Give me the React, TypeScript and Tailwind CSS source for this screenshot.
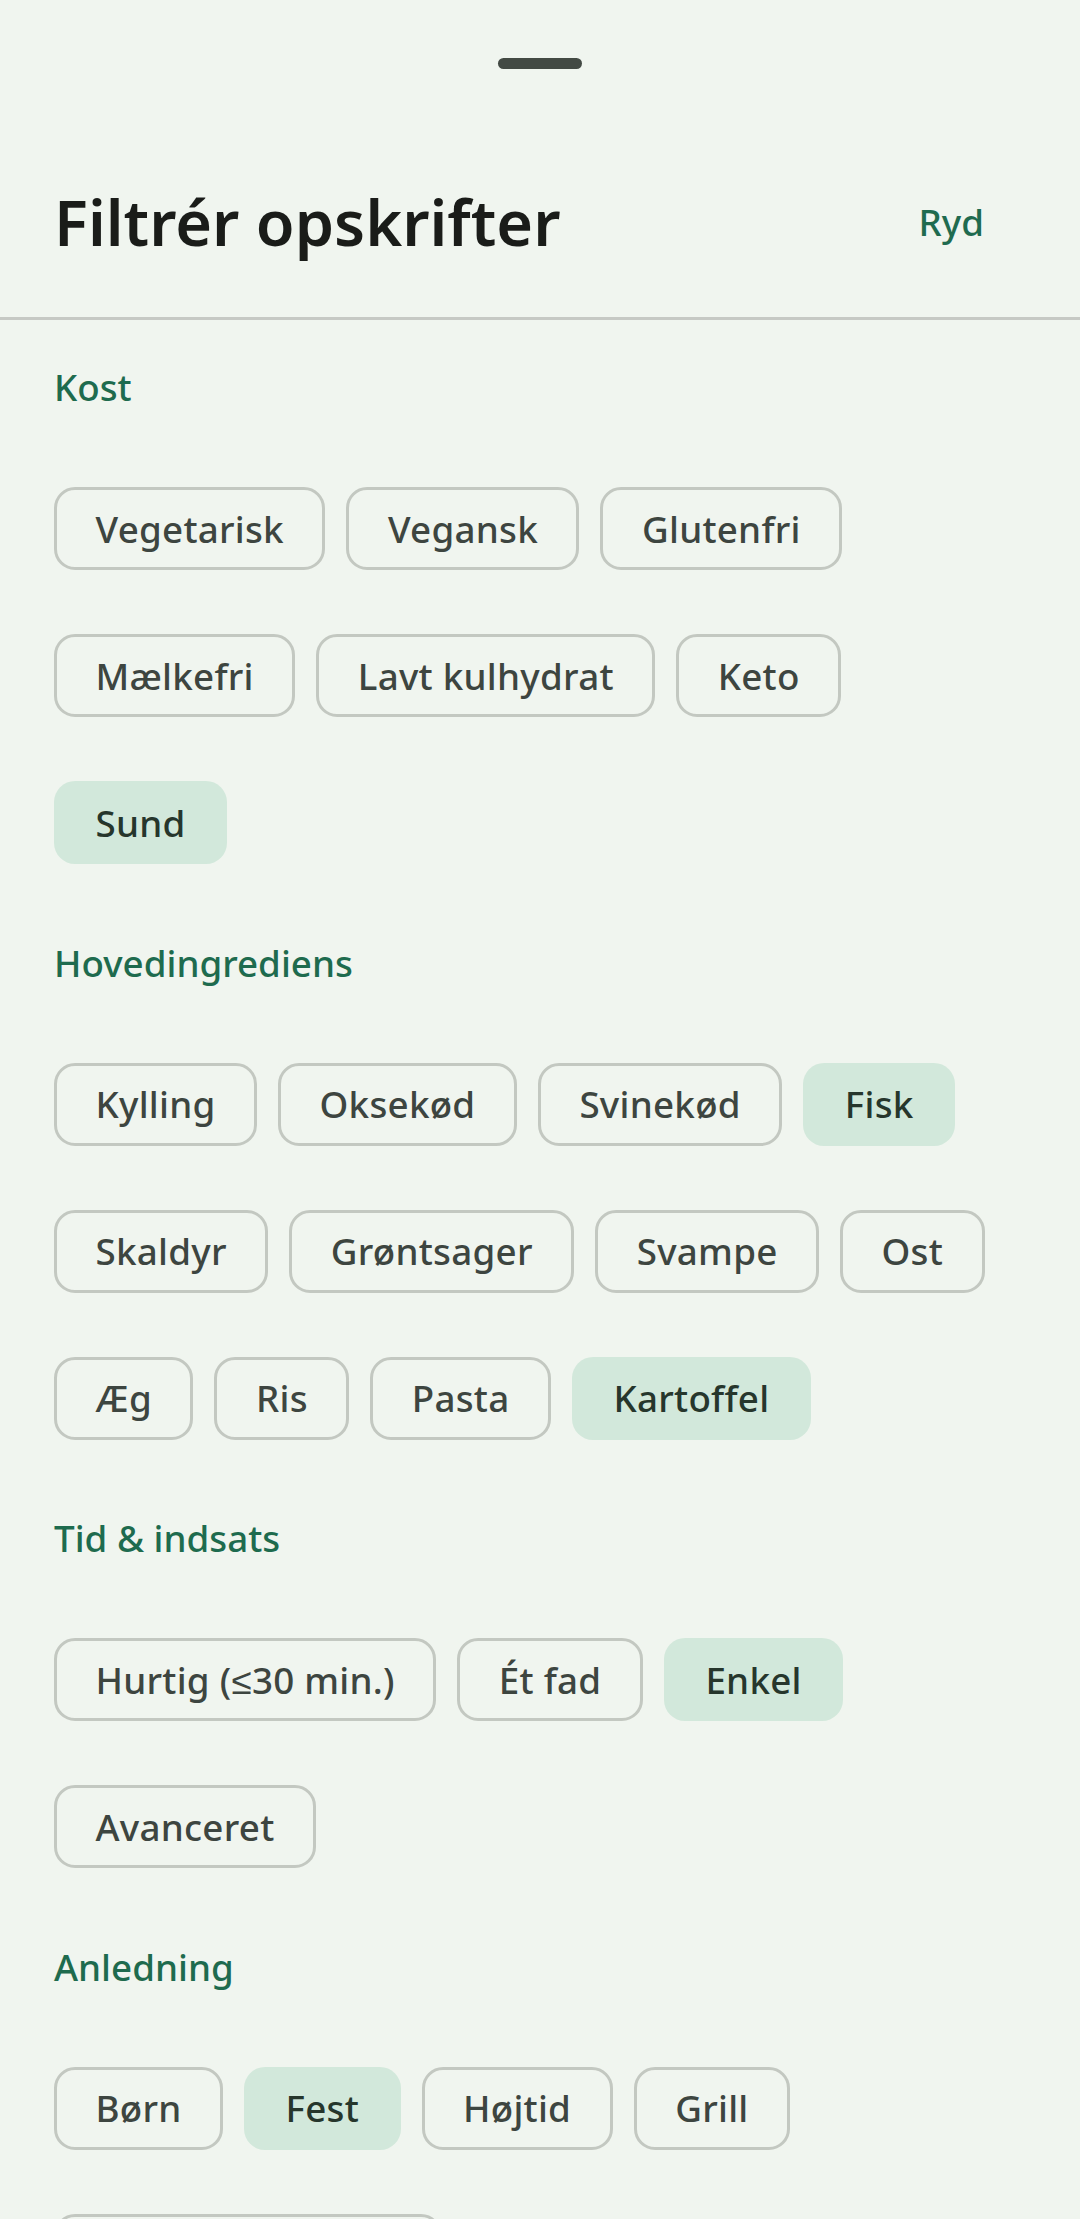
import { useState } from 'react';

type Section = {
    key: string;
    title: string;
    options: string[];
};

const SECTIONS: Section[] = [
    {
        key: 'diet',
        title: 'Kost',
        options: ['Vegetarisk', 'Vegansk', 'Glutenfri', 'Mælkefri', 'Lavt kulhydrat', 'Keto', 'Sund'],
    },
    {
        key: 'main',
        title: 'Hovedingrediens',
        options: ['Kylling', 'Oksekød', 'Svinekød', 'Fisk', 'Skaldyr', 'Grøntsager', 'Svampe', 'Ost', 'Æg', 'Ris', 'Pasta', 'Kartoffel'],
    },
    {
        key: 'effort',
        title: 'Tid & indsats',
        options: ['Hurtig (≤30 min.)', 'Ét fad', 'Enkel', 'Avanceret'],
    },
    {
        key: 'occasion',
        title: 'Anledning',
        options: ['Børn', 'Fest', 'Højtid', 'Grill', 'Hverdagsmiddag'],
    },
];

const INITIAL = ['Sund', 'Fisk', 'Kartoffel', 'Enkel', 'Fest'];

function FilterChip({ label, selected, onToggle }: { label: string; selected: boolean; onToggle: () => void }) {
    return (
        <div className="h-[126px] flex items-center">
            <button
                onClick={onToggle}
                className={`h-[83px] px-[38.5px] rounded-[21px] border-[3px] flex items-center text-[36.75px] leading-[52px] font-medium tracking-[0.26px] whitespace-nowrap ${
                    selected ? 'bg-[#d2e8db] border-transparent text-[#26362c]' : 'bg-transparent border-[#c3c8c1] text-[#3d4540]'
                }`}
            >
                {label}
            </button>
        </div>
    );
}

export default function App() {
    const [selected, setSelected] = useState<string[]>(INITIAL);

    const toggle = (opt: string) =>
        setSelected((prev) => (prev.includes(opt) ? prev.filter((o) => o !== opt) : [...prev, opt]));

    return (
        <div className="min-h-screen bg-[#f0f5ef] font-['Noto_Sans',sans-serif]">
            {/* Drag handle */}
            <div className="pt-[58px] flex justify-center">
                <div className="w-[84px] h-[11px] rounded-full bg-[#434a44]" />
            </div>

            {/* Header */}
            <div className="mt-[111px] flex items-center justify-between pl-[54px] pr-[96px]">
                <h1 className="text-[63px] leading-[84px] font-semibold text-[#1a1c19]">Filtrér opskrifter</h1>
                <button onClick={() => setSelected([])} className="text-[36.75px] leading-[52px] font-medium text-[#1f6b4f]">
                    Ryd
                </button>
            </div>

            <div className="mt-[53px] h-[3px] bg-[#c6c9c4]" />

            {/* Sections */}
            <div className="px-[54px] pt-[41px]">
                {SECTIONS.map((s) => (
                    <div key={s.key} className="mb-[51px]">
                        <p className="text-[36.75px] leading-[52.5px] font-medium text-[#1e6b4e]">{s.title}</p>
                        <div className="mt-[52px] flex flex-wrap gap-x-[21px] gap-y-[21px]">
                            {s.options.map((opt) => (
                                <FilterChip key={opt} label={opt} selected={selected.includes(opt)} onToggle={() => toggle(opt)} />
                            ))}
                        </div>
                    </div>
                ))}
            </div>
        </div>
    );
}
